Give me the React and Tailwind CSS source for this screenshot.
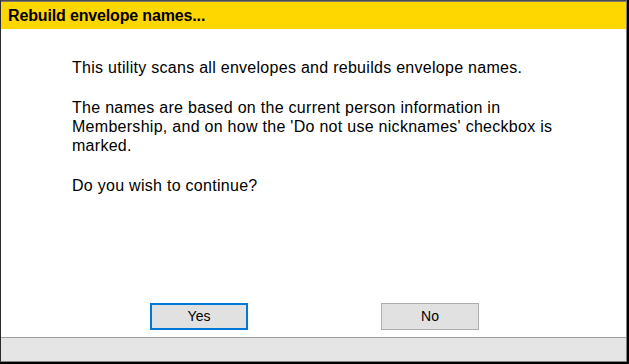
export default function App() {
  return (
    <div className="w-[629px] h-[364px] bg-black pr-[2px] pb-[2px]" style={{ fontFamily: '"Liberation Sans", Arial, sans-serif' }}>
      <div className="w-full h-full flex flex-col border-t border-l border-r border-b border-t-[#4a4a4a] border-l-[#2a2a2a] border-r-[#808080] border-b-[#808080] bg-white">
        <div className="h-[28px] border-t border-t-[#7a7a7a] bg-[#ffd700] flex items-center pl-[7px] shrink-0">
          <span className="text-[16px] tracking-[-0.15px] font-bold text-black leading-none">Rebuild envelope names...</span>
        </div>
        <div className="flex-1 flex flex-col bg-white">
          <div className="pt-[29px] pl-[71px] pr-[70px] text-[16px] tracking-[0.28px] leading-[19px] text-black">
            <p>This utility scans all envelopes and rebuilds envelope names.</p>
            <p className="mt-[21px]">The names are based on the current person information in Membership, and on how the 'Do not use nicknames' checkbox is marked.</p>
            <p className="mt-[21px]">Do you wish to continue?</p>
          </div>
          <div className="flex-1" />
          <div className="flex pl-[149px] pb-[7px]">
            <button className="w-[98px] h-[27px] bg-[#e1e1e1] border-2 border-[#0078d7] text-[14px] text-black">Yes</button>
            <button className="ml-[133px] w-[98px] h-[27px] bg-[#e1e1e1] border border-[#adadad] text-[14px] text-black">No</button>
          </div>
        </div>
        <div className="h-[24px] shrink-0 bg-[#e5e5e5] border-t border-t-[#a0a0a0]" />
      </div>
    </div>
  );
}
